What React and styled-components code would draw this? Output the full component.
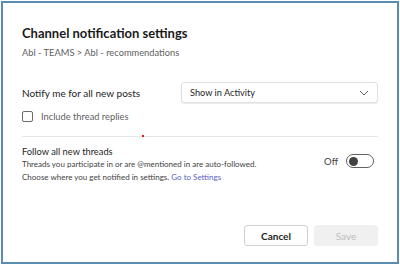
import React from 'react';
import styled, { createGlobalStyle } from 'styled-components';

const GlobalStyle = createGlobalStyle`
  html, body {
    margin: 0;
    padding: 0;
    background: #ffffff;
  }
  body {
    font-family: 'Segoe UI', Lato, 'Open Sans', sans-serif;
    color: #242424;
  }
`;

const Frame = styled.div`
  box-sizing: border-box;
  width: 398px;
  height: 263px;
  margin: 1px 0 0 1px;
  border: 2px solid #5b8db0;
  background: #ffffff;
  padding: 21px 19px 0 19px;
  display: flex;
  flex-direction: column;
`;

const Title = styled.h2`
  margin: 0;
  font-size: 13px;
  font-weight: 700;
  line-height: 18px;
  color: #1a1a1a;
`;

const Crumbs = styled.div`
  margin-top: 4px;
  font-size: 9.3px;
  line-height: 13px;
  color: #616161;
`;

const Row = styled.div`
  display: flex;
  align-items: center;
  justify-content: space-between;
  margin-top: 23px;
`;

const Label = styled.span`
  font-size: 10px;
  color: #242424;
`;

const Select = styled.button`
  box-sizing: border-box;
  width: 197px;
  height: 21px;
  display: flex;
  align-items: center;
  justify-content: space-between;
  padding: 0 8px;
  border: 1px solid #e0e0e0;
  border-radius: 3px;
  background: #ffffff;
  box-shadow: 0 1px 1px rgba(0, 0, 0, 0.08);
  font-family: inherit;
  font-size: 9.2px;
  color: #242424;
`;

const CheckRow = styled.label`
  display: flex;
  align-items: center;
  gap: 8px;
  height: 12px;
  margin-top: 7px;
  font-size: 9.3px;
  color: #616161;
`;

const Box = styled.span`
  box-sizing: border-box;
  width: 11px;
  height: 11px;
  border: 1px solid #6b6b6b;
  border-radius: 2px;
`;

const Rule = styled.div`
  position: relative;
  margin-top: 14px;
  height: 1px;
  background: #e6e6e6;
`;

const Speck = styled.span`
  position: absolute;
  left: 120px;
  top: -1px;
  width: 2px;
  height: 2px;
  background: #e01e1e;
`;

const Follow = styled.div`
  display: flex;
  justify-content: space-between;
  align-items: flex-start;
  margin-top: 9px;
`;

const Texts = styled.div`
  display: flex;
  flex-direction: column;
`;

const Heading = styled.div`
  font-size: 9.3px;
  line-height: 12px;
  color: #242424;
`;

const Note = styled.div`
  font-size: 8px;
  line-height: 12.5px;
  color: #424242;
`;

const Link = styled.a`
  color: #5b5fc7;
  text-decoration: none;
`;

const Switch = styled.div`
  display: flex;
  align-items: center;
  gap: 8px;
  margin-top: 8px;
  margin-right: 4px;
  font-size: 9.5px;
  color: #424242;
`;

const Track = styled.span`
  box-sizing: border-box;
  width: 28px;
  height: 14px;
  border: 1px solid #616161;
  border-radius: 7px;
  display: flex;
  align-items: center;
  padding: 0 2px;
`;

const Knob = styled.span`
  width: 9px;
  height: 9px;
  border-radius: 50%;
  background: #424242;
`;

const Footer = styled.div`
  margin-top: auto;
  margin-bottom: 16px;
  display: flex;
  justify-content: flex-end;
  gap: 6px;
`;

const Button = styled.button`
  box-sizing: border-box;
  width: 64px;
  height: 21px;
  border-radius: 3px;
  font-family: inherit;
  font-size: 10px;
  border: 1px solid ${p => (p.$disabled ? '#f0f0f0' : '#d1d1d1')};
  background: ${p => (p.$disabled ? '#f0f0f0' : '#ffffff')};
  color: ${p => (p.$disabled ? '#bdbdbd' : '#242424')};
  font-weight: ${p => (p.$disabled ? 400 : 700)};
`;

const Chevron = () => (
  <svg width="10" height="6" viewBox="0 0 10 6" fill="none">
    <path d="M1 1l4 4 4-4" stroke="#616161" strokeWidth="1" />
  </svg>
);

export default function App() {
  return (
    <>
      <GlobalStyle />
      <Frame>
        <Title>Channel notification settings</Title>
        <Crumbs>Abl - TEAMS &gt; Abl - recommendations</Crumbs>
        <Row>
          <Label>Notify me for all new posts</Label>
          <Select>
            <span>Show in Activity</span>
            <Chevron />
          </Select>
        </Row>
        <CheckRow>
          <Box />
          Include thread replies
        </CheckRow>
        <Rule>
          <Speck />
        </Rule>
        <Follow>
          <Texts>
            <Heading>Follow all new threads</Heading>
            <Note>Threads you participate in or are @mentioned in are auto-followed.</Note>
            <Note>
              Choose where you get notified in settings. <Link>Go to Settings</Link>
            </Note>
          </Texts>
          <Switch>
            Off
            <Track>
              <Knob />
            </Track>
          </Switch>
        </Follow>
        <Footer>
          <Button>Cancel</Button>
          <Button $disabled>Save</Button>
        </Footer>
      </Frame>
    </>
  );
}
